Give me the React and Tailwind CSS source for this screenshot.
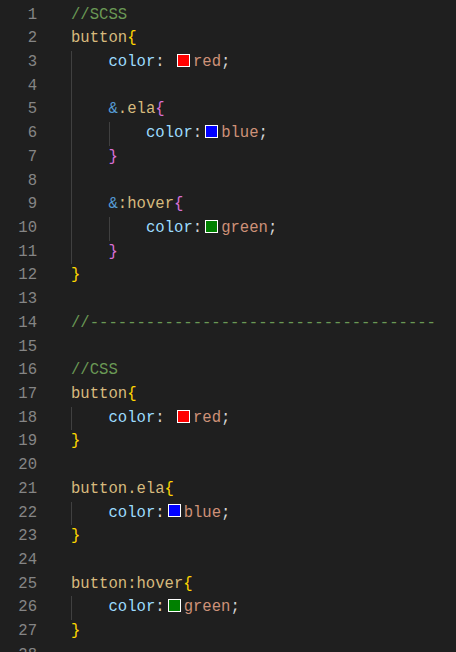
import React from "react";

// VS Code Dark+ token colours
const C = {
  comment: "text-[#6a9955]",
  sel: "text-[#d7ba7d]",
  amp: "text-[#569cd6]",
  prop: "text-[#9cdcfe]",
  punc: "text-[#d4d4d4]",
  val: "text-[#ce9178]",
  b1: "text-[#ffd700]",
  b2: "text-[#da70d6]",
};

const t = (cls, text) => ({ cls, text });
const sw = (color) => ({ swatch: color });

// guides = number of indent guides drawn, then the tokens after indentation
const LINES = [
  { g: 0, tokens: [t(C.comment, "//SCSS")] },
  { g: 0, tokens: [t(C.sel, "button"), t(C.b1, "{")] },
  { g: 1, tokens: [t(C.prop, "color"), t(C.punc, ": "), sw("bg-[#ff0000]"), t(C.val, "red"), t(C.punc, ";")] },
  { g: 1, tokens: [] },
  { g: 1, tokens: [t(C.amp, "&"), t(C.sel, ".ela"), t(C.b2, "{")] },
  { g: 2, tokens: [t(C.prop, "color"), t(C.punc, ":"), sw("bg-[#0000ff]"), t(C.val, "blue"), t(C.punc, ";")] },
  { g: 1, tokens: [t(C.b2, "}")] },
  { g: 1, tokens: [] },
  { g: 1, tokens: [t(C.amp, "&"), t(C.sel, ":hover"), t(C.b2, "{")] },
  { g: 2, tokens: [t(C.prop, "color"), t(C.punc, ":"), sw("bg-[#008000]"), t(C.val, "green"), t(C.punc, ";")] },
  { g: 1, tokens: [t(C.b2, "}")] },
  { g: 0, tokens: [t(C.b1, "}")] },
  { g: 0, tokens: [] },
  { g: 0, tokens: [t(C.comment, "//" + "-".repeat(37))] },
  { g: 0, tokens: [] },
  { g: 0, tokens: [t(C.comment, "//CSS")] },
  { g: 0, tokens: [t(C.sel, "button"), t(C.b1, "{")] },
  { g: 1, tokens: [t(C.prop, "color"), t(C.punc, ": "), sw("bg-[#ff0000]"), t(C.val, "red"), t(C.punc, ";")] },
  { g: 0, tokens: [t(C.b1, "}")] },
  { g: 0, tokens: [] },
  { g: 0, tokens: [t(C.sel, "button.ela"), t(C.b1, "{")] },
  { g: 1, tokens: [t(C.prop, "color"), t(C.punc, ":"), sw("bg-[#0000ff]"), t(C.val, "blue"), t(C.punc, ";")] },
  { g: 0, tokens: [t(C.b1, "}")] },
  { g: 0, tokens: [] },
  { g: 0, tokens: [t(C.sel, "button:hover"), t(C.b1, "{")] },
  { g: 1, tokens: [t(C.prop, "color"), t(C.punc, ":"), sw("bg-[#008000]"), t(C.val, "green"), t(C.punc, ";")] },
  { g: 0, tokens: [t(C.b1, "}")] },
  { g: 0, tokens: [] },
];

function CodeLine({ line }) {
  return (
    <div className="flex h-[23.73px] items-center whitespace-pre">
      {Array.from({ length: line.g }).map((_, i) => (
        <span key={i} className="h-full w-[37.5px] shrink-0 border-l border-[#404040]" />
      ))}
      {line.tokens.map((tok, i) =>
        tok.swatch ? (
          <span
            key={i}
            className={`mx-[3px] mb-[5px] inline-block h-[13px] w-[13px] shrink-0 border border-white ${tok.swatch}`}
          />
        ) : (
          <span key={i} className={tok.cls}>
            {tok.text}
          </span>
        )
      )}
    </div>
  );
}

export default function App() {
  return (
    <div
      className="h-[652px] w-[456px] overflow-hidden bg-[#1f1f1f] pt-[3.5px] text-[15.6px] leading-[23.73px]"
      style={{ fontFamily: '"Liberation Mono", "DejaVu Sans Mono", monospace' }}
    >
      <div className="flex">
        <div className="w-[37px] shrink-0 text-right text-[#858585]">
          {LINES.map((_, i) => (
            <div key={i} className="h-[23.73px]">
              {i + 1}
            </div>
          ))}
        </div>
        <div className="ml-[34px] flex-1">
          {LINES.map((line, i) => (
            <CodeLine key={i} line={line} />
          ))}
        </div>
      </div>
    </div>
  );
}
